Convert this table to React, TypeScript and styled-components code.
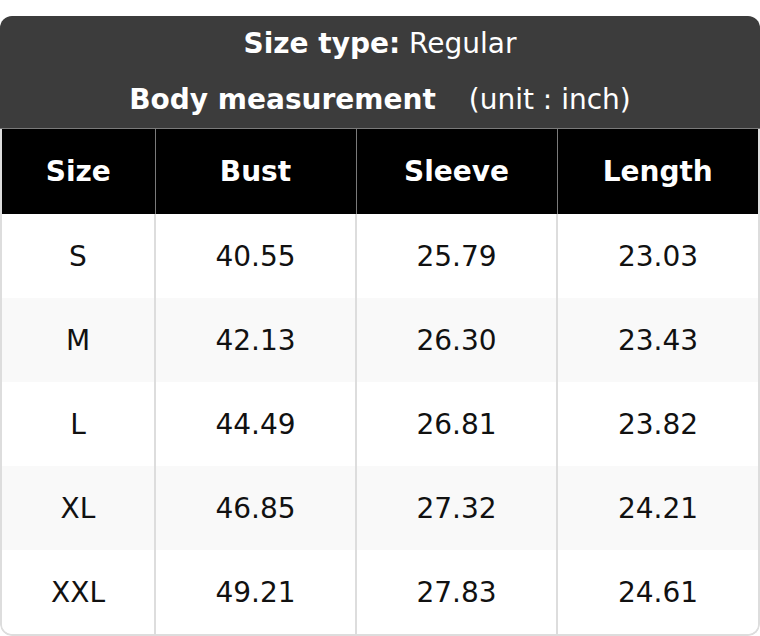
import React from "react";
import styled, { createGlobalStyle } from "styled-components";

const GlobalStyle = createGlobalStyle`
  body {
    margin: 0;
    background: #ffffff;
    font-family: "DejaVu Sans", "Noto Sans", sans-serif;
  }
`;

const Page = styled.div`
  padding-top: 16px;
  width: 760px;
`;

const Card = styled.div`
  border-radius: 12px;
  overflow: hidden;
  background: #ffffff;
`;

const Title = styled.div`
  background: #3c3c3c;
  color: #ffffff;
  text-align: center;
  font-size: 28px;
  border-bottom: 1px solid #7a7a7a;
`;

const TitleLine = styled.div`
  height: 56px;
  line-height: 56px;
`;

const Label = styled.b<{ $gap?: boolean }>`
  font-weight: bold;
  margin-right: ${(p) => (p.$gap ? "24px" : "0")};
`;

const TableWrap = styled.div`
  border: 2px solid #dddddd;
  border-top: none;
  border-radius: 0 0 12px 12px;
  overflow: hidden;
`;

const Table = styled.table`
  width: 100%;
  border-collapse: collapse;
  table-layout: fixed;
  font-size: 28px;
`;

const HeadCell = styled.th`
  background: #000000;
  color: #ffffff;
  font-weight: bold;
  height: 85px;
  padding: 0;
  text-align: center;
  border-left: 1px solid #7a7a7a;
  border-right: 1px solid #7a7a7a;
  &:first-child {
    border-left: none;
  }
  &:last-child {
    border-right: none;
  }
`;

const Row = styled.tr<{ $shade: boolean }>`
  background: ${(p) => (p.$shade ? "#f9f9f9" : "#ffffff")};
`;

const Cell = styled.td`
  height: 84px;
  padding: 0;
  text-align: center;
  color: #111111;
  border-left: 2px solid #dddddd;
  border-right: 2px solid #dddddd;
  &:first-child {
    border-left: none;
  }
  &:last-child {
    border-right: none;
  }
`;

const columns = ["Size", "Bust", "Sleeve", "Length"];
const widths = [153, 201, 201, 201];

const rows = [
  ["S", "40.55", "25.79", "23.03"],
  ["M", "42.13", "26.30", "23.43"],
  ["L", "44.49", "26.81", "23.82"],
  ["XL", "46.85", "27.32", "24.21"],
  ["XXL", "49.21", "27.83", "24.61"],
];

export default function App() {
  return (
    <Page>
      <GlobalStyle />
      <Card>
        <Title>
          <TitleLine>
            <Label>Size type:</Label> Regular
          </TitleLine>
          <TitleLine>
            <Label $gap>Body measurement</Label> (unit : inch)
          </TitleLine>
        </Title>
        <TableWrap>
          <Table>
            <colgroup>
              {widths.map((w, i) => (
                <col key={i} style={{ width: w }} />
              ))}
            </colgroup>
            <thead>
              <tr>
                {columns.map((c) => (
                  <HeadCell key={c}>{c}</HeadCell>
                ))}
              </tr>
            </thead>
            <tbody>
              {rows.map((r, i) => (
                <Row key={r[0]} $shade={i % 2 === 1}>
                  {r.map((v, j) => (
                    <Cell key={j}>{v}</Cell>
                  ))}
                </Row>
              ))}
            </tbody>
          </Table>
        </TableWrap>
      </Card>
    </Page>
  );
}
